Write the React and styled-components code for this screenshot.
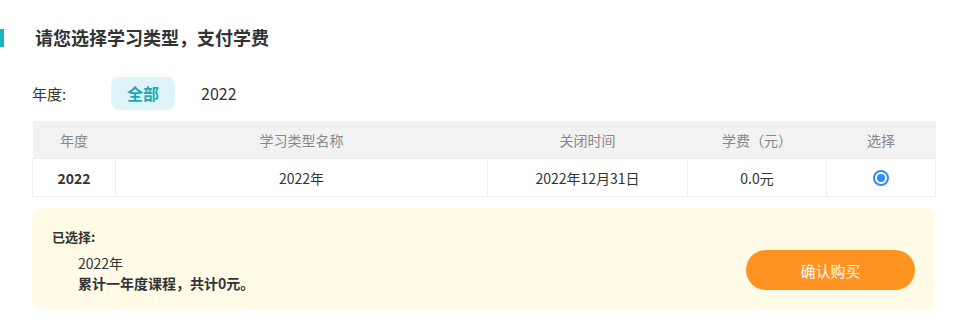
import React, { useState } from "react";
import styled, { createGlobalStyle } from "styled-components";

const GlobalStyle = createGlobalStyle`
  html, body {
    margin: 0;
    padding: 0;
    background: #ffffff;
    font-family: "Noto Sans CJK SC", "Noto Sans", "Liberation Sans", sans-serif;
    color: #333;
  }
`;

const Page = styled.div`
  width: 954px;
  height: 330px;
  box-sizing: border-box;
  padding: 0 19px 0 32px;
  background: #fff;
  border-radius: 8px;
  overflow: hidden;
`;

const TitleBar = styled.div`
  display: flex;
  align-items: center;
  height: 18px;
  margin: 29px 0 0 -32px;
  padding-left: 35px;
  border-left: 4px solid #18b4c0;
  box-sizing: border-box;
`;

const Title = styled.h2`
  margin: -2px 0 0 -4px;
  font-size: 18px;
  font-weight: 700;
  line-height: 18px;
  color: #333;
`;

const FilterRow = styled.div`
  display: flex;
  align-items: center;
  margin-top: 29px;
  height: 34px;
`;

const FilterLabel = styled.span`
  font-size: 15px;
  color: #333;
  width: 79px;
`;

const FilterChip = styled.button`
  border: none;
  height: 33px;
  padding: 0 ${(p) => (p.$active ? "16px" : "14px")};
  margin-right: 12px;
  border-radius: 8px;
  font-family: inherit;
  font-size: 16px;
  font-weight: ${(p) => (p.$active ? 700 : 400)};
  color: ${(p) => (p.$active ? "#1aa9b6" : "#333")};
  background: ${(p) => (p.$active ? "#dff4f8" : "transparent")};
  cursor: pointer;
`;

const Table = styled.table`
  width: 903px;
  margin-top: 11px;
  border-collapse: collapse;
  table-layout: fixed;
`;

const Th = styled.th`
  height: 37px;
  padding: 0;
  background: #f2f2f2;
  color: #888;
  font-size: 14px;
  font-weight: 400;
  text-align: center;
`;

const Td = styled.td`
  height: 37px;
  padding: 0;
  border: 1px solid #eeeeee;
  font-size: 14px;
  font-weight: ${(p) => (p.$bold ? 700 : 400)};
  color: #333;
  text-align: center;
`;

const Radio = styled.span`
  display: inline-block;
  width: 16px;
  height: 16px;
  border: 2px solid #2f8cf2;
  border-radius: 50%;
  box-sizing: border-box;
  position: relative;
  vertical-align: middle;
  margin-top: -3px;

  &::after {
    content: "";
    position: absolute;
    left: 2px;
    top: 2px;
    width: 8px;
    height: 8px;
    border-radius: 50%;
    background: #2f8cf2;
  }
`;

const Summary = styled.div`
  display: flex;
  align-items: flex-end;
  justify-content: space-between;
  width: 903px;
  height: 102px;
  box-sizing: border-box;
  margin-top: 11px;
  padding: 20px 20px 20px 20px;
  background: #fffbe7;
  border-radius: 10px;
`;

const SummaryText = styled.div`
  display: flex;
  flex-direction: column;
  align-self: stretch;
`;

const SummaryLabel = styled.div`
  font-size: 13px;
  font-weight: 700;
  line-height: 18px;
  color: #333;
`;

const SummaryItem = styled.div`
  margin-left: 26px;
  margin-top: ${(p) => (p.$first ? "7px" : "0")};
  font-size: 14px;
  font-weight: ${(p) => (p.$bold ? 700 : 400)};
  line-height: 20px;
  color: #333;
`;

const BuyButton = styled.button`
  width: 169px;
  height: 40px;
  margin-bottom: 0;
  border: none;
  border-radius: 20px;
  background: #ff9322;
  color: #fff;
  font-family: inherit;
  font-size: 15px;
  cursor: pointer;
`;

const years = ["全部", "2022"];

const rows = [
  { year: "2022", name: "2022年", close: "2022年12月31日", fee: "0.0元" },
];

const App = () => {
  const [active, setActive] = useState("全部");

  return (
    <Page>
      <GlobalStyle />
      <TitleBar>
        <Title>请您选择学习类型，支付学费</Title>
      </TitleBar>

      <FilterRow>
        <FilterLabel>年度:</FilterLabel>
        {years.map((y) => (
          <FilterChip key={y} $active={active === y} onClick={() => setActive(y)}>
            {y}
          </FilterChip>
        ))}
      </FilterRow>

      <Table>
        <colgroup>
          <col style={{ width: 83 }} />
          <col style={{ width: 372 }} />
          <col style={{ width: 200 }} />
          <col style={{ width: 139 }} />
          <col style={{ width: 109 }} />
        </colgroup>
        <thead>
          <tr>
            <Th>年度</Th>
            <Th>学习类型名称</Th>
            <Th>关闭时间</Th>
            <Th>学费（元）</Th>
            <Th>选择</Th>
          </tr>
        </thead>
        <tbody>
          {rows.map((r) => (
            <tr key={r.year}>
              <Td $bold>{r.year}</Td>
              <Td>{r.name}</Td>
              <Td>{r.close}</Td>
              <Td>{r.fee}</Td>
              <Td>
                <Radio />
              </Td>
            </tr>
          ))}
        </tbody>
      </Table>

      <Summary>
        <SummaryText>
          <SummaryLabel>已选择:</SummaryLabel>
          <SummaryItem $first>2022年</SummaryItem>
          <SummaryItem $bold>累计一年度课程，共计0元。</SummaryItem>
        </SummaryText>
        <BuyButton>确认购买</BuyButton>
      </Summary>
    </Page>
  );
};

export default App;
